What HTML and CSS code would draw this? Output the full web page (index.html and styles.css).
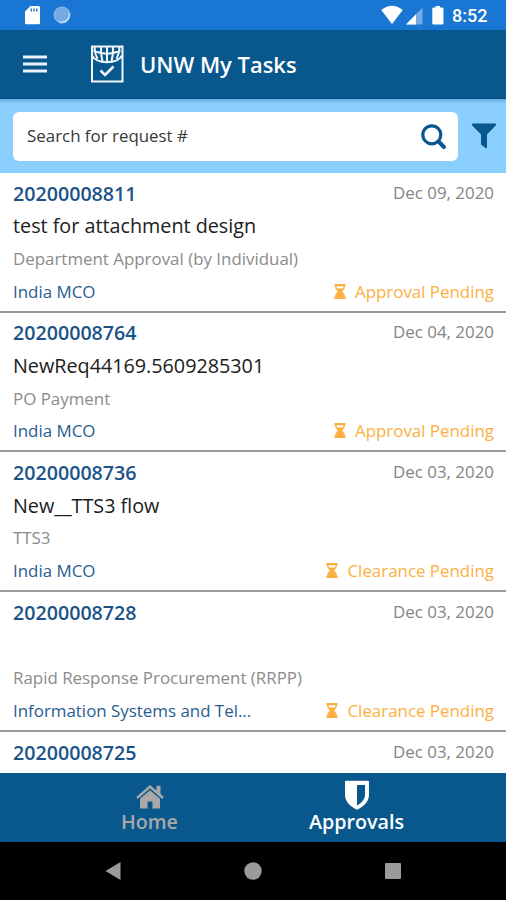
FILE: index.html
```html
<!DOCTYPE html>
<html lang="en">
<head>
<meta charset="utf-8">
<title>UNW My Tasks</title>
<link rel="stylesheet" href="styles.css">
</head>
<body>
<svg class="defs" aria-hidden="true">
  <symbol id="hourglass" viewBox="0 0 12 16">
    <path fill="currentColor" d="M0 0h12v2.300H0zM0 13.700h12V16H0z"/>
    <path fill="none" stroke="currentColor" stroke-width="1.5" d="M1.600 2v1.500C1.600 6 4.300 6.600 4.300 8S1.600 10 1.600 12.500V14M10.400 2v1.500C10.400 6 7.700 6.600 7.700 8s2.700 2 2.700 4.500V14"/>
    <path fill="currentColor" d="M2.200 4.800h7.600L7.700 8v1.200l2.100 1.800v3H2.200v-3l2.100-1.800V8z"/>
  </symbol>
</svg>
<div class="phone">
  <div class="status">
    <svg class="status-left" width="50" height="30" viewBox="0 0 50 30">
      <path fill="#fff" fill-rule="evenodd" d="M6.500 6H14.500q1.500 0 1.500 1.500v15.300q0 1.500-1.500 1.500H2.500Q1 24.300 1 22.800V11.500zM6.500 8.500v3h1.400v-3zm2.800 0v3h1.400v-3zm2.800 0v3h1.400v-3z"/>
      <circle cx="38" cy="15" r="8" fill="#74aae5"/>
      <path fill="none" stroke="#d4e6fa" stroke-width="1.600" d="M45.200 13a7.700 7.700 0 0 1-10 9"/>
      <circle cx="38" cy="15" r="8" fill="none" stroke="#9dc4ef" stroke-width=".8"/>
    </svg>
    <svg class="status-right" width="64" height="30" viewBox="0 0 64 30">
      <path fill="#fff" d="M.2 10Q11 1.500 21.800 10L11 24z"/>
      <path fill="#76abe5" d="M41.500 7.500v17H25z"/>
      <path fill="#fff" d="M35 14.200v10.300H25z"/>
      <path fill="#fff" d="M54.500 6h4.500v1.600h2.200q1.300 0 1.300 1.300v14.300q0 1.300-1.300 1.300h-8.600q-1.300 0-1.300-1.300V8.900q0-1.300 1.300-1.300h1.900z"/>
    </svg>
    <span class="clock">8:52</span>
  </div>
  <header class="appbar">
    <svg class="menu" width="24" height="18" viewBox="0 0 24 18"><path fill="#e9f2fa" d="M0 .500h24V3.500H0zM0 7.500h24v3H0zM0 14.500h24v3H0z"/></svg>
    <svg class="logo" width="34" height="38" viewBox="0 0 34 38">
      <g fill="none" stroke="#f1f6fb" stroke-width="2">
        <path d="M2 1.500h30.500v35H2z"/>
        <path d="M2 10.500C7 19.500 27 19.500 32 10.500M3.500 5.500Q17 12 30.500 5.500M11 2q-.5 8 1.500 14M17 2v15M23 2q.5 8-1.500 14M4.500 2q0 6 3 12M29.500 2q0 6-3 12"/>
        <path stroke-width="2.600" d="M10.500 25.500l4.500 4.500 8.500-8.500"/>
      </g>
    </svg>
    <h1 class="title">UNW My Tasks</h1>
  </header>
  <div class="search">
    <div class="field">
      <span class="placeholder">Search for request #</span>
      <svg width="26" height="26" viewBox="0 0 26 26"><g fill="none" stroke="#08588e"><circle cx="10.800" cy="10.800" r="9" stroke-width="3.200"/><path stroke-width="4" stroke-linecap="round" d="M18 18l5 5"/></g></svg>
    </div>
    <svg width="26" height="26" viewBox="0 0 26 26"><path fill="#08588e" d="M1.500.5h23q1.300.6.4 1.800L16 11.500v13q-.5 1.300-1.700.5L10 21.500v-10L1 2.300Q.300 1 1.500.5z"/></svg>
  </div>
  <main class="list">
    <article class="row">
      <div class="line"><span class="id">20200008811</span><span class="date">Dec 09, 2020</span></div>
      <div class="line name">test for attachment design</div>
      <div class="line type">Department Approval (by Individual)</div>
      <div class="line"><span class="office">India MCO</span><span class="state"><svg><use href="#hourglass"/></svg>Approval Pending</span></div>
    </article>
    <article class="row">
      <div class="line"><span class="id">20200008764</span><span class="date">Dec 04, 2020</span></div>
      <div class="line name">NewReq44169.5609285301</div>
      <div class="line type">PO Payment</div>
      <div class="line"><span class="office">India MCO</span><span class="state"><svg><use href="#hourglass"/></svg>Approval Pending</span></div>
    </article>
    <article class="row">
      <div class="line"><span class="id">20200008736</span><span class="date">Dec 03, 2020</span></div>
      <div class="line name">New__TTS3 flow</div>
      <div class="line type">TTS3</div>
      <div class="line"><span class="office">India MCO</span><span class="state"><svg><use href="#hourglass"/></svg>Clearance Pending</span></div>
    </article>
    <article class="row">
      <div class="line"><span class="id">20200008728</span><span class="date">Dec 03, 2020</span></div>
      <div class="line name"></div>
      <div class="line type">Rapid Response Procurement (RRPP)</div>
      <div class="line"><span class="office">Information Systems and Tel...</span><span class="state"><svg><use href="#hourglass"/></svg>Clearance Pending</span></div>
    </article>
    <article class="row">
      <div class="line"><span class="id">20200008725</span><span class="date">Dec 03, 2020</span></div>
    </article>
  </main>
  <nav class="tabs">
    <div class="tab">
      <svg width="28" height="30" viewBox="0 0 28 30"><g fill="#aaa9a9"><path d="M14 5L.2 17l1.600 1.900L14 8.300l12.200 10.600 1.600-1.900-3.300-2.900V5.700h-4v4.900z"/><path d="M14 10.200L4 18.800v9.700h7.500v-7h5v7H24v-9.700z"/></g></svg>
      <span>Home</span>
    </div>
    <div class="tab active">
      <svg width="28" height="30" viewBox="0 0 28 30"><path fill="#fff" fill-rule="evenodd" d="M3 .8h22q1 0 1 1v12.700c0 7.500-5.500 12-12 15.300C7.500 26.500 2 22 2 14.500V1.800q0-1 1-1zM14 5v20.500c4.500-2.500 8-6 8-11V5z"/></svg>
      <span>Approvals</span>
    </div>
  </nav>
  <div class="sysnav">
    <svg width="16" height="18" viewBox="0 0 16 18"><path fill="#9b9b9b" d="M15.500 0v18L.5 9z"/></svg>
    <svg width="18" height="18" viewBox="0 0 18 18"><circle cx="9" cy="9" r="8.700" fill="#9b9b9b"/></svg>
    <svg width="16" height="16" viewBox="0 0 16 16"><rect width="16" height="16" rx="1" fill="#9b9b9b"/></svg>
  </div>
</div>
</body>
</html>
```
FILE: styles.css
```css
* { box-sizing: border-box; }
body { margin: 0; font-family: "Open Sans", sans-serif; background: #fff; }
svg { display: block; flex: none; }
.defs { display: none; }
.phone { width: 506px; height: 900px; display: flex; flex-direction: column; overflow: hidden; }
.status { height: 30px; flex: none; background: #1976d2; display: flex; align-items: center; padding: 0 18px 0 24px; }
.status-right { margin-left: auto; }
.clock { font: 500 18px/30px Roboto, sans-serif; color: #fff; width: 36px; margin-left: 7px; white-space: nowrap; padding-top: 2px; }
.appbar { height: 69px; flex: none; background: #08588e; display: flex; align-items: center; padding-left: 23px; border-bottom: 1px solid #064a7c; }
.logo { margin-left: 43px; }
.title { margin: 0 0 0 16px; font-size: 21.950px; line-height: 30px; font-weight: 600; color: #fff; white-space: nowrap; padding-top: 1px; }
.search { height: 74px; flex: none; background: linear-gradient(#6db0e0, #8bcfff 5px); display: flex; align-items: center; padding: 0 10px 0 13px; gap: 13px; }
.field { width: 445px; height: 49px; flex: none; background: #fff; border-radius: 6px; display: flex; align-items: center; justify-content: space-between; padding: 0 11px 0 14px; }
.field svg { margin-top: 2px; }
.placeholder { font-size: 16.900px; color: #383838; white-space: nowrap; padding-bottom: 2px; }
.list { height: 600px; flex: none; overflow: hidden; }
.row { height: 139.700px; padding: 4px 12px 0 13px; border-bottom: 2px solid #9c9c9c; }
.line { height: 32.600px; display: flex; align-items: center; justify-content: space-between; white-space: nowrap; }
.id { font-size: 19.650px; font-weight: 600; color: #1b5389; }
.date { font-size: 16.900px; color: #858585; padding-bottom: 2px; }
.name { font-size: 19.750px; color: #202020; }
.type { font-size: 16.900px; color: #8b8b8b; }
.office { font-size: 16.900px; color: #285d90; }
.state { font-size: 16.900px; color: #fbb040; display: flex; align-items: center; }
.state svg { width: 12px; height: 15px; margin-right: 9px; }
.tabs { height: 69px; flex: none; background: #08588e; display: flex; padding: 7px 46px 0; }
.tab { flex: 1; display: flex; flex-direction: column; align-items: center; color: #aaa9a9; font-size: 19.700px; line-height: 26px; font-weight: 600; }
.tab span { margin-top: -1px; }
.active { color: #fff; }
.sysnav { height: 58px; flex: none; background: #000; display: flex; align-items: center; justify-content: space-between; padding: 0 105px; }
```
